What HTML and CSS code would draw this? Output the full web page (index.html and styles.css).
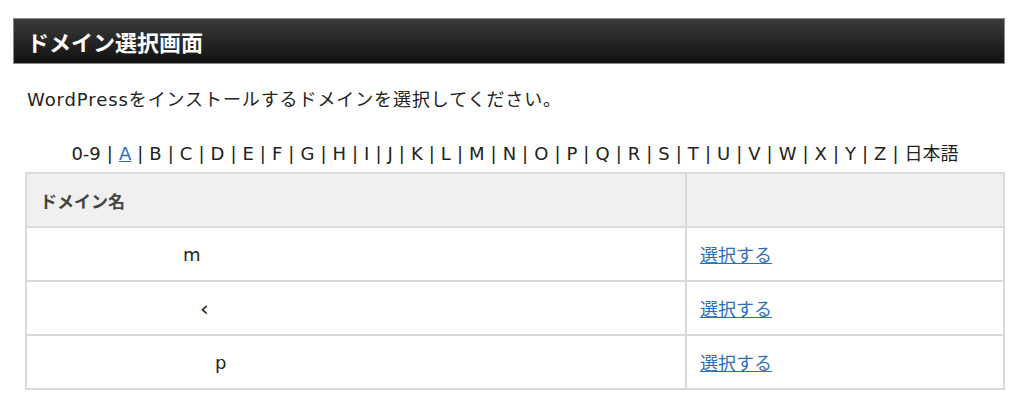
FILE: index.html
```html
<!DOCTYPE html>
<html lang="ja">
<head>
    <meta charset="UTF-8">
    <title>ドメイン選択画面</title>
    <link rel="stylesheet" href="styles.css">
</head>
<body>
    <div class="page">
        <h2 class="title">ドメイン選択画面</h2>
        <div class="content">
            <p class="lead">WordPressをインストールするドメインを選択してください。</p>
            <div class="index">
                0-9 | <a href="#">A</a> | B | C | D | E | F | G | H | I | J | K | L | M | N | O | P | Q | R | S | T | U | V | W | X | Y | Z | 日本語
            </div>
            <table class="domains">
                <thead>
                    <tr>
                        <th class="col-name">ドメイン名</th>
                        <th></th>
                    </tr>
                </thead>
                <tbody>
                    <tr>
                        <td class="name name-1">m</td>
                        <td><a href="#">選択する</a></td>
                    </tr>
                    <tr>
                        <td class="name name-2">&lsaquo;</td>
                        <td><a href="#">選択する</a></td>
                    </tr>
                    <tr>
                        <td class="name name-3">p</td>
                        <td><a href="#">選択する</a></td>
                    </tr>
                </tbody>
            </table>
        </div>
    </div>
</body>
</html>
```

FILE: styles.css
```css
body {
    margin: 0;
    font-family: "DejaVu Sans", "Noto Sans CJK JP", sans-serif;
    font-size: 18px;
    color: #222;
    background: #fff;
}
.page {
    width: 992px;
    padding: 18px 0 0 13px;
}
.title {
    margin: 0;
    height: 44px;
    line-height: 44px;
    padding: 0 13px;
    font-family: "Noto Sans CJK JP", sans-serif;
    font-size: 22px;
    font-weight: bold;
    color: #fff;
    background: linear-gradient(#3b3b3b, #111);
    border: 1px solid #8a8a8a;
}
.content {
    padding-left: 12px;
}
.lead {
    margin: 23px 0 0 2px;
    line-height: 26px;
    letter-spacing: 0.9px;
}
.index {
    margin-top: 28px;
    width: 980px;
    text-align: center;
    line-height: 26px;
    word-spacing: 0.3px;
}
a {
    color: #2a6ebb;
    text-decoration: underline;
}
.domains {
    width: 980px;
    margin-top: 5px;
    border-collapse: collapse;
}
.domains th, .domains td {
    border: 2px solid #dadada;
    height: 52px;
    padding: 0 13px;
    text-align: left;
}
.domains th {
    background: #f0f0f0;
    color: #444;
    font-family: "Noto Sans CJK JP", sans-serif;
    font-size: 17px;
    font-weight: bold;
}
.col-name {
    width: 632px;
}
.domains .name-1 { padding-left: 156px; }
.domains .name-2 { padding-left: 173px; font-size: 22px; }
.domains .name-3 { padding-left: 188px; }
```
